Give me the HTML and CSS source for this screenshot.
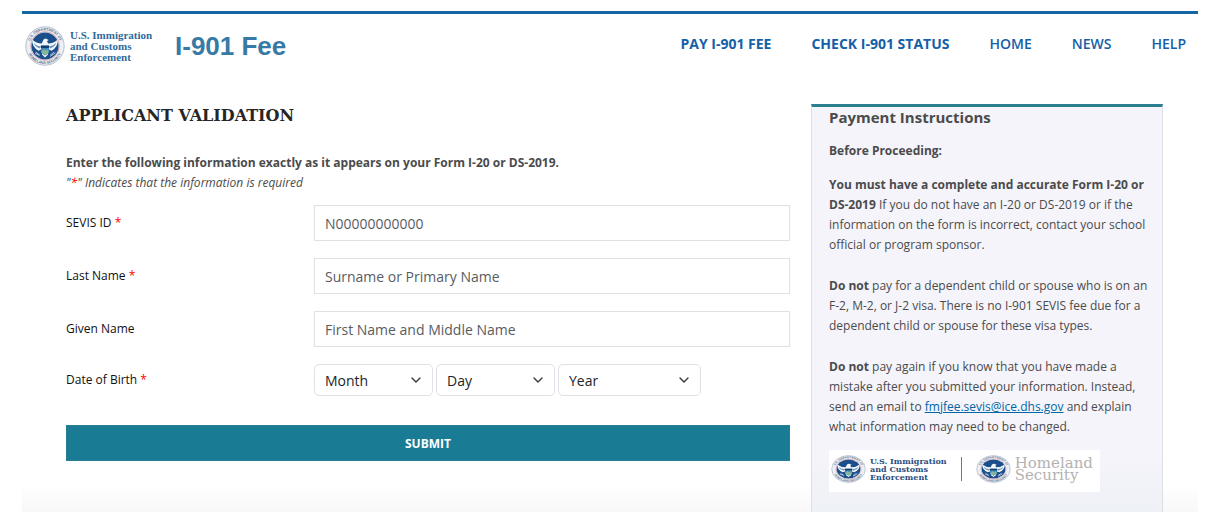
FILE: index.html
```html
<!DOCTYPE html>
<html lang="en">
<head>
    <meta charset="UTF-8">
    <meta name="viewport" content="width=device-width, initial-scale=1.0">
    <title>I-901 Fee - Applicant Validation</title>
    <link rel="stylesheet" href="styles.css">
</head>
<body>
    <!-- shared seal artwork -->
    <svg class="sprite" aria-hidden="true">
        <defs>
            <path id="arc-top" d="M 11 50 A 39 39 0 0 1 89 50"/>
            <path id="arc-bottom" d="M 5 50 A 45 45 0 0 0 95 50"/>
        </defs>
        <symbol id="seal" viewBox="0 0 100 100" preserveAspectRatio="none">
            <circle cx="50" cy="50" r="48" fill="#eceff4" stroke="#a5b1c2" stroke-width="2"/>
            <text class="seal-text"><textPath href="#arc-top" startOffset="50%">U.S. DEPARTMENT OF</textPath></text>
            <text class="seal-text"><textPath href="#arc-bottom" startOffset="50%">HOMELAND SECURITY</textPath></text>
            <circle cx="50" cy="50" r="36" fill="#fff" stroke="#d998a3" stroke-width="2"/>
            <circle cx="50" cy="50" r="34" fill="#1a4f8c"/>
            <path d="M18 34 Q28 44 42 44 L45 36 Q47 31 52 31 L59 35 L55 38 L58 44 Q72 44 82 34 Q83 53 66 62 L60 59 L57 72 L50 79 L43 72 L40 59 L34 62 Q17 53 18 34 Z" fill="#f3f7fa"/>
            <path d="M22 42 Q30 52 41 50 L37 56 Q25 53 22 42 Z M78 42 Q70 52 59 50 L63 56 Q75 53 78 42 Z" fill="#6f97bd"/>
            <path d="M40 49 H60 V62 Q58 70 50 74 Q42 70 40 62 Z" fill="#438ab8"/>
            <path d="M40 49 H60 V55 H40 Z" fill="#163d70"/>
            <path d="M41 63 L47 58 L52 61 L57 58 L59 63 Q57 70 50 73 Q43 70 41 63 Z" fill="#84b59a"/>
            <path d="M27 65 L37 73 M25 68 L36 73 M73 65 L63 73 M76 67 L63 76" fill="none" stroke="#dce8ee" stroke-width="2"/>
        </symbol>
    </svg>

    <div class="page">
        <header class="header">
            <a class="brand" href="#">
                <svg class="brand-seal" role="img" aria-label="Department of Homeland Security seal"><use href="#seal"/></svg>
                <span class="brand-agency">U.S. Immigration<br>and Customs<br>Enforcement</span>
                <span class="brand-title">I-901 Fee</span>
            </a>
            <nav class="nav">
                <a class="strong" href="#">PAY I-901 FEE</a>
                <a class="strong" href="#">CHECK I-901 STATUS</a>
                <a href="#">HOME</a>
                <a href="#">NEWS</a>
                <a href="#">HELP</a>
            </nav>
        </header>

        <div class="content">
            <main>
                <h1>APPLICANT VALIDATION</h1>
                <p class="intro">Enter the following information exactly as it appears on your Form I-20 or DS-2019.</p>
                <p class="hint">"<span class="req">*</span>" Indicates that the information is required</p>

                <form>
                    <div class="row">
                        <label for="sevis">SEVIS ID <span class="req">*</span></label>
                        <input type="text" id="sevis" placeholder="N00000000000">
                    </div>
                    <div class="row">
                        <label for="last-name">Last Name <span class="req">*</span></label>
                        <input type="text" id="last-name" placeholder="Surname or Primary Name">
                    </div>
                    <div class="row">
                        <label for="given-name">Given Name</label>
                        <input type="text" id="given-name" placeholder="First Name and Middle Name">
                    </div>
                    <div class="row">
                        <label for="month">Date of Birth <span class="req">*</span></label>
                        <div class="dates">
                            <div class="select">
                                <select id="month"><option>Month</option></select>
                                <svg class="chevron" viewBox="0 0 10 6"><path d="M1 1l4 4 4-4"/></svg>
                            </div>
                            <div class="select">
                                <select id="day" aria-label="Day"><option>Day</option></select>
                                <svg class="chevron" viewBox="0 0 10 6"><path d="M1 1l4 4 4-4"/></svg>
                            </div>
                            <div class="select year">
                                <select id="year" aria-label="Year"><option>Year</option></select>
                                <svg class="chevron" viewBox="0 0 10 6"><path d="M1 1l4 4 4-4"/></svg>
                            </div>
                        </div>
                    </div>
                    <button class="submit" type="button">SUBMIT</button>
                </form>
            </main>

            <aside class="sidebar">
                <h2>Payment Instructions</h2>
                <h3>Before Proceeding:</h3>
                <p><strong>You must have a complete and accurate Form I-20 or DS-2019</strong> If you do not have an I-20 or DS-2019 or if the information on the form is incorrect, contact your school official or program sponsor.</p>
                <p><strong>Do not</strong> pay for a dependent child or spouse who is on an F-2, M-2, or J-2 visa. There is no I-901 SEVIS fee due for a dependent child or spouse for these visa types.</p>
                <p><strong>Do not</strong> pay again if you know that you have made a mistake after you submitted your information. Instead, send an email to <a href="mailto:fmjfee.sevis@ice.dhs.gov">fmjfee.sevis@ice.dhs.gov</a> and explain what information may need to be changed.</p>
                <div class="logos">
                    <svg class="logo-seal" aria-hidden="true"><use href="#seal"/></svg>
                    <span class="logo-ice">U.S. Immigration<br>and Customs<br>Enforcement</span>
                    <span class="logo-line"></span>
                    <svg class="logo-seal" aria-hidden="true"><use href="#seal"/></svg>
                    <span class="logo-dhs">Homeland<br>Security</span>
                </div>
            </aside>
        </div>
    </div>
</body>
</html>
```
FILE: styles.css
```css
* {
    box-sizing: border-box;
    margin: 0;
    padding: 0;
}

body {
    display: flex;
    min-height: 100vh;
    padding: 11px 16px 14px 22px;
    background: #fff;
    color: #4b4b4b;
    font-family: "Open Sans", sans-serif;
    font-size: 12px;
    line-height: 20px;
}

.sprite {
    position: absolute;
    width: 0;
    height: 0;
}

.seal-text {
    fill: #5c7390;
    font-family: "Liberation Sans", sans-serif;
    font-size: 9px;
    font-weight: bold;
    text-anchor: middle;
}

.page {
    flex: 1;
    display: flex;
    flex-direction: column;
    border-top: 3px solid #1465a3;
    background: linear-gradient(to top, #f8f8f8, #fff 28px);
}

.header {
    display: flex;
    justify-content: space-between;
    align-items: center;
    height: 64px;
    padding: 0 12px 0 3px;
}

.brand {
    display: flex;
    align-items: center;
    color: #326a9b;
    text-decoration: none;
}

.brand-seal {
    width: 40px;
    height: 40px;
    margin-right: 5px;
}

.brand-agency {
    width: 105px;
    font-family: "Liberation Serif", serif;
    font-size: 11px;
    font-weight: bold;
    line-height: 11px;
    white-space: nowrap;
}

.brand-title {
    color: #377aa5;
    font-family: "Liberation Sans", sans-serif;
    font-size: 26px;
    font-weight: bold;
    line-height: 32px;
}

.nav {
    display: flex;
    gap: 40px;
}

.nav a {
    color: #1460a8;
    font-size: 14px;
    font-weight: 600;
    line-height: 24px;
    padding-bottom: 4px;
    text-decoration: none;
}

.nav .strong {
    font-weight: bold;
}

.content {
    flex: 1;
    display: grid;
    grid-template-columns: 724fr 352fr;
    gap: 21px;
    padding: 26px 35px 0 44px;
}

h1 {
    color: #262626;
    font-family: "Roboto Slab", "DejaVu Serif", serif;
    font-size: 16px;
    line-height: 24px;
    margin-bottom: 25px;
}

.intro {
    font-weight: bold;
}

.hint {
    font-style: italic;
    margin-bottom: 12px;
}

.req {
    color: #f00;
}

.row {
    display: grid;
    grid-template-columns: 248fr 476fr;
    align-items: center;
    margin-bottom: 17px;
    color: #111;
}

input,
select {
    width: 100%;
    padding: 0 10px;
    border: 1px solid #dee2e6;
    background: #fff;
    color: #212529;
    font-family: inherit;
    font-size: 14px;
}

input {
    height: 36px;
}

input::placeholder {
    color: #595c5f;
    opacity: 1;
}

.dates {
    display: flex;
    gap: 3px;
}

.select {
    position: relative;
    width: 25%;
}

.select.year {
    width: 30%;
}

select {
    height: 32px;
    border-radius: 5px;
    appearance: none;
}

.chevron {
    position: absolute;
    top: 13px;
    right: 12px;
    width: 10px;
    height: 6px;
    fill: none;
    stroke: #343a40;
    stroke-width: 1.4;
    stroke-linecap: round;
    pointer-events: none;
}

.submit {
    width: 100%;
    height: 36px;
    margin-top: 12px;
    border: 1px solid #2a7f96;
    background: #197b94;
    color: #fff;
    font-family: inherit;
    font-size: 12px;
    font-weight: bold;
}

.sidebar {
    padding: 0 12px 0 17px;
    border: 1px solid #dcdfe6;
    border-top: 3px solid #2a7f90;
    border-bottom: none;
    background: linear-gradient(to top, #eef1f5, #f4f4fa 50px);
}

.sidebar h2 {
    font-size: 15px;
    line-height: 20px;
    margin-bottom: 14px;
}

.sidebar h3 {
    font-size: 12px;
    line-height: 20px;
    margin-bottom: 14px;
}

.sidebar p {
    margin-bottom: 21px;
}

.sidebar p:last-of-type {
    margin-bottom: 13px;
}

.sidebar p a {
    color: #0067a5;
}

.logos {
    display: flex;
    align-items: center;
    width: 271px;
    height: 42px;
    padding: 0 2px 4px;
    background: #fff;
    font-family: "DejaVu Serif", serif;
    white-space: nowrap;
}

.logo-seal {
    width: 35px;
    height: 28px;
    margin-right: 4px;
}

.logo-ice {
    color: #2b4d7e;
    font-size: 8px;
    font-weight: bold;
    line-height: 8px;
}

.logo-line {
    width: 1px;
    height: 24px;
    margin: 0 14px;
    background: #777;
}

.logo-dhs {
    color: #b2b2b2;
    font-size: 15px;
    line-height: 12px;
}
```
